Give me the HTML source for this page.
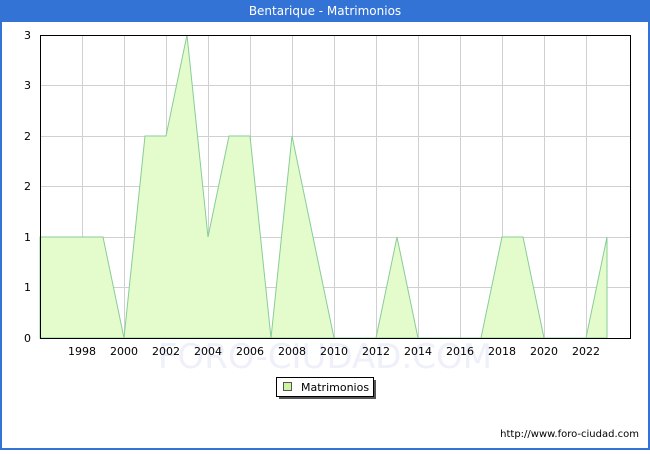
<!DOCTYPE html>
<html><head><meta charset="utf-8"><style>
body{margin:0;width:650px;height:450px;overflow:hidden;background:#fff;font-family:"DejaVu Sans","Liberation Sans",sans-serif}
</style></head><body>
<svg width="650" height="450" xmlns="http://www.w3.org/2000/svg" font-family="DejaVu Sans, Liberation Sans, sans-serif">
<rect x="0" y="0" width="650" height="450" fill="#3373d6"/>
<rect x="2" y="22" width="646" height="426" fill="#fff"/>
<text x="325" y="15" fill="#fff" font-size="12" text-anchor="middle">Bentarique - Matrimonios</text>
<g stroke="#d0d0d0" stroke-width="1">
<line x1="82.5" y1="35" x2="82.5" y2="338"/><line x1="124.5" y1="35" x2="124.5" y2="338"/><line x1="166.5" y1="35" x2="166.5" y2="338"/><line x1="208.5" y1="35" x2="208.5" y2="338"/><line x1="250.5" y1="35" x2="250.5" y2="338"/><line x1="292.5" y1="35" x2="292.5" y2="338"/><line x1="334.5" y1="35" x2="334.5" y2="338"/><line x1="376.5" y1="35" x2="376.5" y2="338"/><line x1="418.5" y1="35" x2="418.5" y2="338"/><line x1="460.5" y1="35" x2="460.5" y2="338"/><line x1="502.5" y1="35" x2="502.5" y2="338"/><line x1="544.5" y1="35" x2="544.5" y2="338"/><line x1="586.5" y1="35" x2="586.5" y2="338"/>
<line x1="40" y1="85.5" x2="630" y2="85.5"/><line x1="40" y1="136.5" x2="630" y2="136.5"/><line x1="40" y1="186.5" x2="630" y2="186.5"/><line x1="40" y1="237.5" x2="630" y2="237.5"/><line x1="40" y1="287.5" x2="630" y2="287.5"/>
</g>
<text x="325" y="368" fill="#eef0fa" font-size="34" text-anchor="middle">FORO-CIUDAD.COM</text>
<polygon fill="#e4fccc" stroke="#88cc99" stroke-width="1" points="40,237 61,237 82,237 103,237 124,338 145,136 166,136 187,35 208,237 229,136 250,136 271,338 292,136 313,237 334,338 355,338 376,338 397,237 418,338 439,338 460,338 481,338 502,237 523,237 544,338 565,338 586,338 607,237 607,338 40,338"/>
<rect x="40.5" y="35.5" width="590" height="303" fill="none" stroke="#000" stroke-width="1"/>
<g font-size="11" fill="#000" text-anchor="end">
<text x="31" y="39">3</text><text x="31" y="89">3</text><text x="31" y="140">2</text><text x="31" y="190">2</text><text x="31" y="241">1</text><text x="31" y="291">1</text><text x="31" y="342">0</text>
</g>
<g font-size="11" fill="#000" text-anchor="middle">
<text x="82" y="355">1998</text><text x="124" y="355">2000</text><text x="166" y="355">2002</text><text x="208" y="355">2004</text><text x="250" y="355">2006</text><text x="292" y="355">2008</text><text x="334" y="355">2010</text><text x="376" y="355">2012</text><text x="418" y="355">2014</text><text x="460" y="355">2016</text><text x="502" y="355">2018</text><text x="544" y="355">2020</text><text x="586" y="355">2022</text>
</g>
<rect x="279" y="380" width="97" height="19" fill="#555"/>
<rect x="276.5" y="377.5" width="97" height="19" fill="#fff" stroke="#000"/>
<rect x="283.5" y="382.5" width="8" height="8" fill="#ccf5a0" stroke="#555"/>
<text x="301" y="391" font-size="11">Matrimonios</text>
<text x="639" y="437" font-size="10" text-anchor="end">http://www.foro-ciudad.com</text>
</svg>
</body></html>
